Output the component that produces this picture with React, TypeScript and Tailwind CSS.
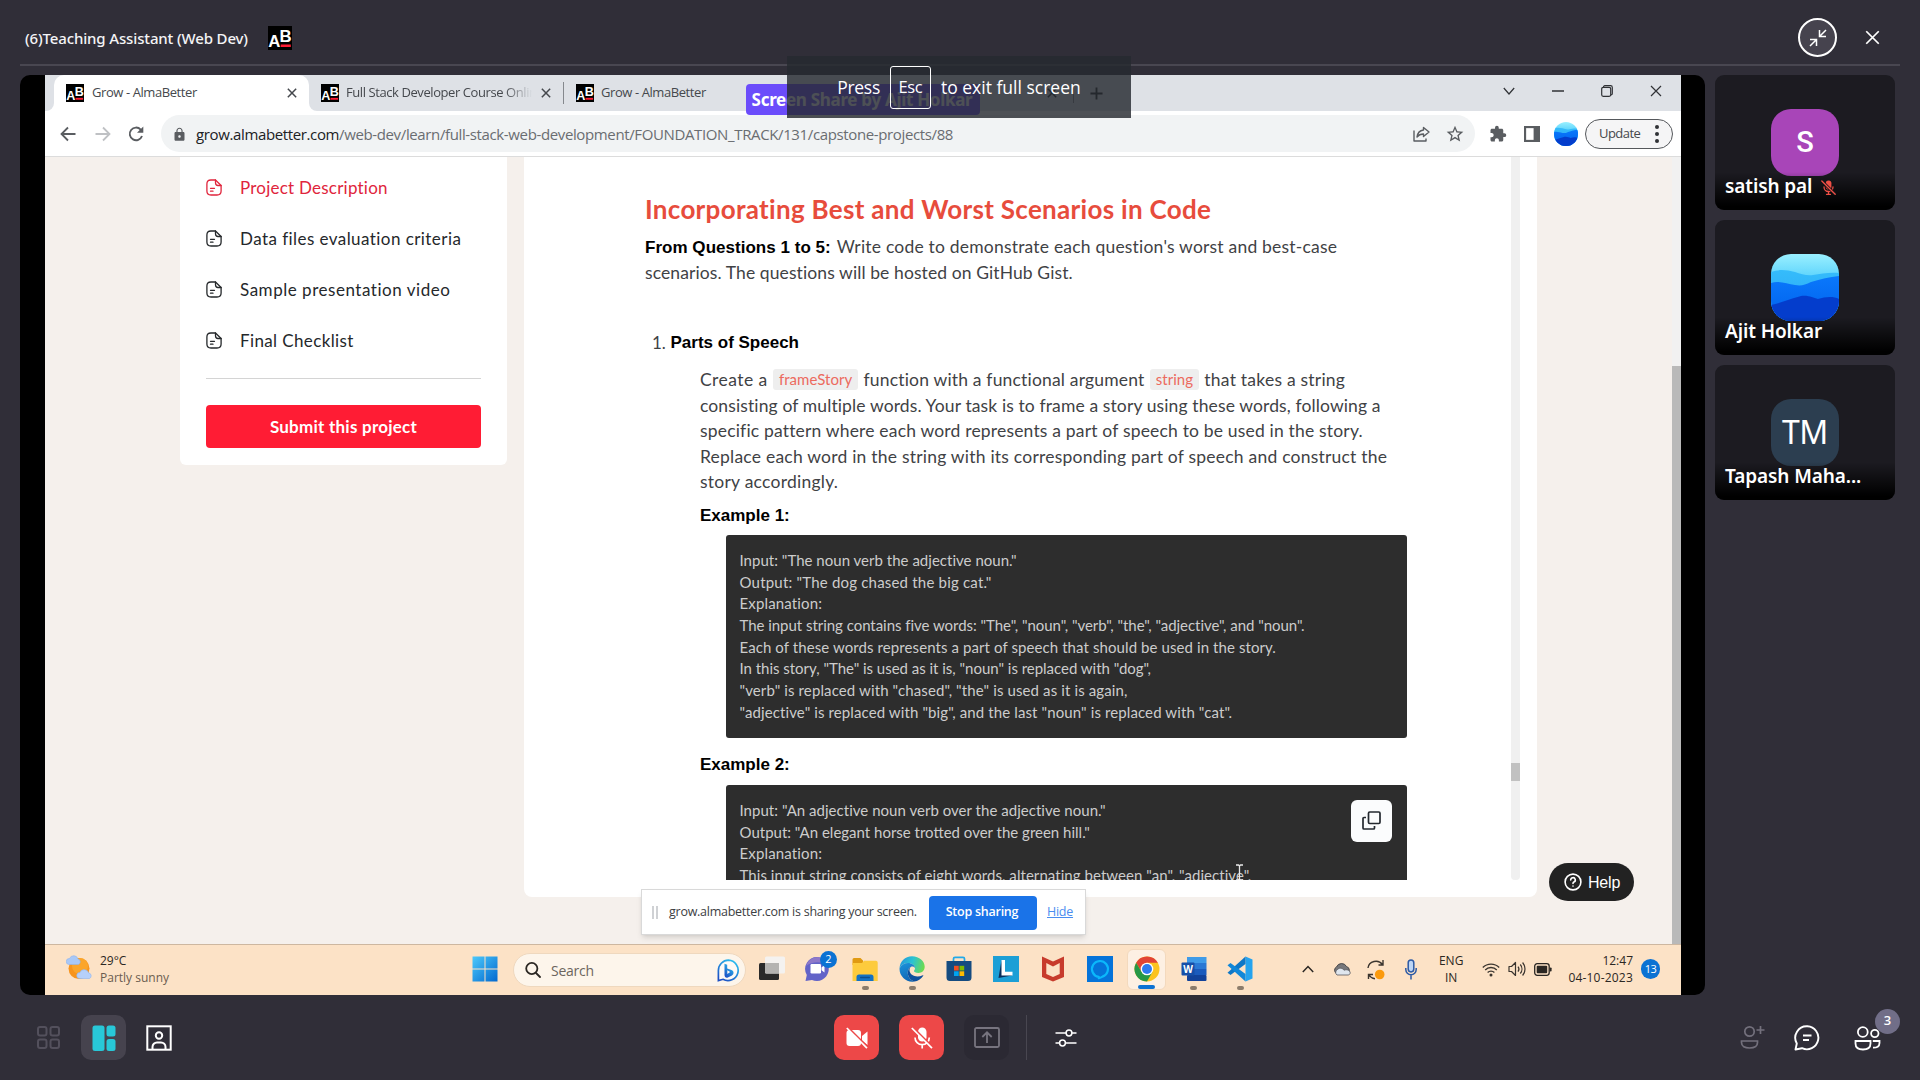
import type { ReactNode } from "react";
import { MdExtension, MdLock, MdStarBorder } from "react-icons/md";

/* ---------- logos and pictures ---------- */

function AlmaLogo({ size }: { size: number }) {
  return (
    <svg width={size} height={size} viewBox="0 0 20 20" className="shrink-0">
      <rect width="20" height="20" fill="#000" />
      <text x="0.2" y="17.5" fontSize="14" fontWeight="700" fill="#fff" fontFamily="Liberation Sans, sans-serif">A</text>
      <text x="9.6" y="13.4" fontSize="14" fontWeight="700" fill="#fff" fontFamily="Liberation Sans, sans-serif">B</text>
      <rect x="10.6" y="15.4" width="8.4" height="2.1" fill="#ff1c34" />
    </svg>
  );
}

function Hills({ size, id }: { size: number; id: string }) {
  return (
    <svg width={size} height={size} viewBox="0 0 68 68" preserveAspectRatio="none" className="block shrink-0">
      <defs>
        <linearGradient id={id} x1="0" y1="0" x2="0" y2="1">
          <stop offset="0" stopColor="#9af0ff" />
          <stop offset="0.35" stopColor="#5cd3fc" />
        </linearGradient>
        <linearGradient id={id + "m"} x1="0" y1="0" x2="0" y2="1">
          <stop offset="0" stopColor="#35bcfb" />
          <stop offset="0.5" stopColor="#2fb0f8" />
        </linearGradient>
        <linearGradient id={id + "n"} x1="0" y1="0" x2="0" y2="1">
          <stop offset="0" stopColor="#0a78fb" />
          <stop offset="1" stopColor="#0060ec" />
        </linearGradient>
      </defs>
      <rect width="68" height="68" fill={`url(#${id})`} />
      <path d="M0 18C8 15 16 16 24 18C30 20 36 22 42 21C50 20 58 18 68 19V68H0Z" fill={`url(#${id}m)`} />
      <path d="M0 29C8 26 16 30 24 31C30 32 34 31 40 28C50 25 58 23 68 22V68H0Z" fill={`url(#${id}n)`} />
      <path d="M0 51C10 49 22 44 30 42C38 41 42 44 47 45C54 43 62 42 68 45V68H0Z" fill="#043dcc" />
    </svg>
  );
}

function DocIcon() {
  return (
    <svg width="16" height="17" viewBox="0 0 16 17" fill="none" stroke="currentColor" strokeWidth="1.3" strokeLinecap="round" strokeLinejoin="round" className="shrink-0">
      <path d="M9.5 1H5C2 1 0.9 2.3 0.9 5V12C0.9 14.8 2 16 5 16H11C14 16 15.1 14.8 15.1 12V6.5Z" />
      <path d="M9.5 1V3.8C9.5 6 10.2 6.5 12 6.5H15.1" />
      <path d="M4.5 9.3H8.5M4.5 12.2H7" />
    </svg>
  );
}

/* ---------- taskbar icons ---------- */

function WeatherIcon() {
  return (
    <svg width="27" height="26" viewBox="0 0 27 26">
      <circle cx="13" cy="13.5" r="10.5" fill="#f7941d" />
      <circle cx="14" cy="11" r="8" fill="#fba52b" />
      <path d="M3 9.5a3 3 0 0 1 .5-6A4.5 4.5 0 0 1 12 4a2.9 2.9 0 0 1 .5 5.5Z" fill="#a9c8f7" stroke="#8db3ee" strokeWidth="0.6" />
      <path d="M13.5 23.5a3 3 0 0 1 .5-6 4.6 4.6 0 0 1 8.7.5 2.9 2.9 0 0 1 .8 5.5Z" fill="#b6d0fa" stroke="#8db3ee" strokeWidth="0.6" />
    </svg>
  );
}

function StartIcon() {
  return (
    <svg width="26" height="26" viewBox="0 0 26 26">
      <defs>
        <linearGradient id="win" x1="0" y1="0" x2="1" y2="1">
          <stop offset="0" stopColor="#4cc9fb" />
          <stop offset="1" stopColor="#0268cf" />
        </linearGradient>
      </defs>
      <path d="M0.5 0.5H12.5V12.5H0.5ZM13.5 0.5H25.5V12.5H13.5ZM0.5 13.5H12.5V25.5H0.5ZM13.5 13.5H25.5V25.5H13.5Z" fill="url(#win)" />
    </svg>
  );
}

function BingIcon() {
  return (
    <svg width="23" height="23" viewBox="0 0 23 23" fill="none">
      <defs>
        <linearGradient id="bing" x1="0.8" y1="0" x2="0.2" y2="1">
          <stop offset="0" stopColor="#2bc0f0" />
          <stop offset="1" stopColor="#1c4fc4" />
        </linearGradient>
      </defs>
      <path d="M11.5 1.2A10.2 10.2 0 1 1 6 20.3L1.4 21.6V11.5A10.2 10.2 0 0 1 11.5 1.2Z" stroke="url(#bing)" strokeWidth="1.7" fill="#fdfaf6" />
      <path d="M7.5 4.8L10.2 5.8V9.5L14.5 11C17 12 17.2 15 15 16.5L10.8 18.5C9 19.2 7.5 17.8 7.5 16Z" fill="url(#bing)" />
      <path d="M10.3 11.2L13.2 13L10.3 15Z" fill="#fdfaf6" />
    </svg>
  );
}

function TaskViewIcon() {
  return (
    <svg width="26" height="26" viewBox="0 0 26 26">
      <rect x="0" y="7" width="20" height="17" rx="1.5" fill="#2a2a2a" />
      <rect x="6" y="0.5" width="20" height="17" rx="1.5" fill="#f4f2f0" />
      <path d="M6 7H20V17.5H7.5A1.5 1.5 0 0 1 6 16Z" fill="#b4b3b1" />
    </svg>
  );
}

function ChatIcon() {
  return (
    <svg width="26" height="26" viewBox="0 0 26 26">
      <path d="M12.5 1A12 12 0 1 1 7 24L0.5 25L1.8 19A12 12 0 0 1 12.5 1Z" fill="#6263c8" />
      <path d="M12.5 1A12 12 0 0 0 1 10C8 5 17 5 24 10A12 12 0 0 0 12.5 1Z" fill="#8d78c9" />
      <rect x="5.5" y="8" width="10.5" height="9.5" rx="1.2" fill="#fff" />
      <path d="M16.5 11.5L19.5 9V16.5L16.5 14.2Z" fill="#fff" />
    </svg>
  );
}

function FolderIcon() {
  return (
    <svg width="26" height="26" viewBox="0 0 26 26">
      <path d="M0.5 3.5A1.5 1.5 0 0 1 2 2H8.5L11 4.5V9H0.5Z" fill="#e09a12" />
      <path d="M0.5 7H10L12 4.8H24A1.8 1.8 0 0 1 25.7 6.5V25H0.5Z" fill="#fdcb3d" />
      <path d="M4.5 25V21A2.5 2.5 0 0 1 7 18.5H19A2.5 2.5 0 0 1 21.5 21V25Z" fill="#1272c4" />
      <rect x="8" y="20.8" width="10" height="1.5" rx="0.7" fill="#0a4e8f" />
    </svg>
  );
}

function EdgeIcon() {
  return (
    <svg width="26" height="26" viewBox="0 0 26 26">
      <defs>
        <linearGradient id="eg1" x1="0" y1="0.3" x2="1" y2="0.5">
          <stop offset="0" stopColor="#2497dc" />
          <stop offset="0.5" stopColor="#2bc3d2" />
          <stop offset="1" stopColor="#6ddb4d" />
        </linearGradient>
        <linearGradient id="eg2" x1="0" y1="0" x2="0.3" y2="1">
          <stop offset="0" stopColor="#1b94dc" />
          <stop offset="1" stopColor="#1167b5" />
        </linearGradient>
      </defs>
      <path d="M0.5 12.5C0.9 5.5 6 0.3 13 0.3C20.5 0.3 25.7 5.5 25.7 10.8C25.7 14.5 23 17 19.5 17C16.5 17 15 15.9 15 15C15 14.4 16 14 16 12.2C16 9.5 13 7 9 7C5 7 2 9 0.5 12.5Z" fill="url(#eg1)" />
      <path d="M0.5 12.5C2 9 5 7 9 7C13 7 16 9.5 16 12C15 10.5 13.5 10.3 12.5 10.5C10 11.5 8.5 14 8.8 17.5C9.2 21 11.5 24.5 15.5 25.5C8 27 0.3 21 0.5 12.5Z" fill="url(#eg2)" />
      <path d="M12 10.7C9.8 12.5 10 16.5 13 18.8C16 21 20 21 23.8 19.2C24.3 19 24.6 19.3 24.3 19.8C22 23.3 18.8 25.2 15.5 25.5C11.5 24.5 9.2 21 8.8 17.5C8.6 14.5 9.7 11.9 12 10.7Z" fill="#0d4f9c" />
    </svg>
  );
}

function StoreIcon() {
  return (
    <svg width="26" height="26" viewBox="0 0 26 26">
      <path d="M7.5 6V2.8A1.5 1.5 0 0 1 9 1.3H17A1.5 1.5 0 0 1 18.5 2.8V6" fill="none" stroke="#22a9e8" strokeWidth="1.7" />
      <path d="M0.5 5H25.5V21.5A3.5 3.5 0 0 1 22 25H4A3.5 3.5 0 0 1 0.5 21.5Z" fill="#154b80" />
      <rect x="8" y="9.8" width="4.7" height="4.7" fill="#f25022" />
      <rect x="13.5" y="9.8" width="4.7" height="4.7" fill="#7fba00" />
      <rect x="8" y="15.3" width="4.7" height="4.7" fill="#00a4ef" />
      <rect x="13.5" y="15.3" width="4.7" height="4.7" fill="#ffb900" />
    </svg>
  );
}

function LIcon() {
  return (
    <svg width="26" height="26" viewBox="0 0 26 26">
      <rect width="26" height="26" fill="#1c9fd6" />
      <path d="M8.5 4L5.5 22L19 19.5V17H10Z" fill="#0a2f5c" />
      <path d="M8.5 4H12V15.8H19.5V19.5H8.5Z" fill="#fff" />
    </svg>
  );
}

function McAfeeIcon() {
  return (
    <svg width="26" height="26" viewBox="0 0 26 26">
      <path d="M2 0.5L13 5.5L24 0.5V21L13 25.5L2 21Z" fill="#c73b2c" />
      <path d="M6.3 7L13 10.5L19.7 7V18L13 21L6.3 18Z" fill="#fce2c6" />
    </svg>
  );
}

function AlexaIcon() {
  return (
    <svg width="26" height="26" viewBox="0 0 26 26">
      <rect width="26" height="26" fill="#0573d9" />
      <path d="M11.7 20.9A8 8 0 1 1 15.5 20.6Q13.5 21.8 11.8 22.2Z" fill="none" stroke="#0bb8fb" strokeWidth="2.2" strokeLinejoin="round" />
    </svg>
  );
}

function ChromeIcon() {
  return (
    <svg width="26" height="26" viewBox="0 0 26 26">
      <circle cx="13" cy="13" r="12.5" fill="#fcc31e" />
      <path d="M2.17 6.75A12.5 12.5 0 0 1 23.83 6.75H13L7.6 16.1Z" fill="#e24435" />
      <path d="M2.17 6.75A12.5 12.5 0 0 0 13 25.5L18.4 16.1H7.6Z" fill="#279847" />
      <circle cx="13" cy="13" r="6.3" fill="#fff" />
      <circle cx="13" cy="13" r="5" fill="#2f7bf0" />
    </svg>
  );
}

function WordIcon() {
  return (
    <svg width="26" height="26" viewBox="0 0 26 26">
      <rect x="6" y="1" width="19.5" height="6" fill="#3f9be8" />
      <rect x="6" y="7" width="19.5" height="6" fill="#2a78d4" />
      <rect x="6" y="13" width="19.5" height="6" fill="#1b5bbd" />
      <rect x="6" y="19" width="19.5" height="6" rx="1" fill="#12429a" />
      <rect x="0.5" y="6.5" width="13" height="13" rx="1" fill="#164fa8" />
      <text x="7" y="16.8" textAnchor="middle" fontSize="10" fontWeight="700" fill="#fff" fontFamily="Open Sans, sans-serif">W</text>
    </svg>
  );
}

function CodeIcon() {
  return (
    <svg width="26" height="26" viewBox="0 0 26 26">
      <path d="M18.5 0.5L25.5 3.5V22.5L18.5 25.5Z" fill="#25a3ee" />
      <path d="M18.5 0.5V8L3.5 19L0.5 16.7Z" fill="#0f77c6" />
      <path d="M18.5 25.5V18L3.5 7L0.5 9.3Z" fill="#1187d8" />
    </svg>
  );
}

function TaskItem({ children, running, active, badge }: { children: ReactNode; running?: boolean; active?: boolean; badge?: string }) {
  return (
    <div className={active ? "relative flex h-[41px] w-[39px] flex-col items-center rounded-md border border-[#f3d9bd] bg-[#fdf0e3] pt-[6px]" : "relative flex h-[41px] w-[39px] flex-col items-center pt-[7px]"}>
      {children}
      {running && <span className="absolute bottom-0 h-[4px] w-[7px] rounded-full bg-[#8c7c6b]" />}
      {active && <span className="absolute bottom-0 h-[4px] w-[17px] rounded-full bg-[#0b72d3]" />}
      {badge && (
        <span className="absolute top-[2px] right-[1px] flex size-[17px] items-center justify-center rounded-full bg-[#0b72d3] font-['Open_Sans',sans-serif] text-[11px] text-white">
          {badge}
        </span>
      )}
    </div>
  );
}

function Taskbar() {
  return (
    <div className="flex h-[51px] w-full shrink-0 border-t border-[#cdb7a0] bg-[#fce2c6] font-['Open_Sans',sans-serif] text-[#2b2723]">
      <div className="flex w-[420px] gap-[7px] pt-[10px] pl-[21px]">
        <WeatherIcon />
        <div className="-mt-[3px] flex flex-col text-[12px] leading-[17px]">
          <span>29°C</span>
          <span className="text-[#6b5d50]">Partly sunny</span>
        </div>
      </div>
      <div className="flex w-[60px] items-start pt-[11px] pl-[7px]">
        <StartIcon />
      </div>
      <div className="mt-[8px] -ml-[12px] flex h-[34px] w-[233px] items-center rounded-full border border-[#efd8be] bg-[#fdf5eb] pr-[5px] pl-[11px]">
        <svg width="16" height="16" viewBox="0 0 16 16" fill="none" stroke="#2b2723" strokeWidth="1.8" strokeLinecap="round">
          <circle cx="6.8" cy="6.5" r="5.6" />
          <path d="M11 11L15 15" />
        </svg>
        <span className="ml-[10px] flex-1 text-[14px] tracking-[-0.25px] text-[#6c655e]">Search</span>
        <BingIcon />
      </div>
      <div className="mt-[4px] ml-[6px] flex gap-[7.9px]">
        <TaskItem><TaskViewIcon /></TaskItem>
        <TaskItem badge="2"><ChatIcon /></TaskItem>
        <TaskItem running><FolderIcon /></TaskItem>
        <TaskItem running><EdgeIcon /></TaskItem>
        <TaskItem><StoreIcon /></TaskItem>
        <TaskItem><LIcon /></TaskItem>
        <TaskItem><McAfeeIcon /></TaskItem>
        <TaskItem><AlexaIcon /></TaskItem>
        <TaskItem active><ChromeIcon /></TaskItem>
        <TaskItem running><WordIcon /></TaskItem>
        <TaskItem running><CodeIcon /></TaskItem>
      </div>
      <div className="ml-auto flex h-[48px] items-center pr-[21px]">
        <svg width="12" height="8" viewBox="0 0 12 8" fill="none" stroke="#2b2723" strokeWidth="1.5"><path d="M0.8 7L6 1.5L11.2 7" /></svg>
        <svg width="18" height="14" viewBox="0 0 18 14" className="ml-[19px]">
          <path d="M4 11.5A3.5 3.5 0 0 1 3.5 5A5.5 5.5 0 0 1 13.5 4.5A4 4 0 0 1 14 12Z" fill="#77777a" stroke="#3f3f42" strokeWidth="0.9" />
          <path d="M4 13A3.2 3.2 0 0 1 4.5 7.5C7 5 10 6.5 11 8.2C14 7 17.2 8.5 17.2 10.8C17.2 12.2 16 13 15 13Z" fill="#dfe6ee" stroke="#55555a" strokeWidth="0.8" />
        </svg>
        <svg width="18" height="21" viewBox="0 0 18 21" className="ml-[16px]" fill="none" stroke="#3b352f" strokeWidth="1.4">
          <path d="M1 9A8 7.5 0 0 1 15.5 5.5M16 1V6H11.5" />
          <path d="M1.5 20V15.5H6M2 16A8 7 0 0 0 8 19.8" />
          <circle cx="12.7" cy="15.5" r="4.8" fill="#fb9a0c" stroke="none" />
        </svg>
        <svg width="12" height="21" viewBox="0 0 12 21" className="ml-[20px]" fill="none" stroke="#2c5aa5" strokeWidth="1.5">
          <rect x="3.2" y="0.9" width="5.6" height="12" rx="2.8" fill="#bcd5f5" />
          <path d="M0.8 9V10.5A5.2 5.2 0 0 0 11.2 10.5V9M6 15.7V20.5" />
        </svg>
        <div className="ml-[22px] flex flex-col items-center text-[12px] leading-[17px]">
          <span>ENG</span>
          <span>IN</span>
        </div>
        <svg width="18" height="15" viewBox="0 0 18 15" className="ml-[19px]" fill="none" stroke="#3b352f" strokeWidth="1.3">
          <path d="M0.8 5.5A11.5 11.5 0 0 1 17.2 5.5M3.2 8A8 8 0 0 1 14.8 8M5.6 10.5A4.8 4.8 0 0 1 12.4 10.5" />
          <circle cx="9" cy="13" r="1.5" fill="#3b352f" stroke="none" />
        </svg>
        <svg width="18" height="16" viewBox="0 0 18 16" className="ml-[8px]" fill="none" stroke="#3b352f" strokeWidth="1.2" strokeLinejoin="round">
          <path d="M1 5.5H3.5L7.5 1.5V14.5L3.5 10.5H1Z" />
          <path d="M10 5.5A4 4 0 0 1 10 10.5M12.3 3.5A7 7 0 0 1 12.3 12.5M14.6 1.5A10 10 0 0 1 14.6 14.5" />
        </svg>
        <svg width="18" height="13" viewBox="0 0 18 13" className="ml-[8px]">
          <rect x="0.7" y="0.7" width="14.5" height="11.6" rx="2.5" fill="none" stroke="#2b2723" strokeWidth="1.3" />
          <rect x="2.7" y="2.7" width="10.5" height="7.6" rx="1" fill="#2b2723" />
          <rect x="15.8" y="4.5" width="1.8" height="4" rx="0.8" fill="#2b2723" />
        </svg>
        <div className="ml-[16px] flex flex-col items-end text-[12px] leading-[17px]">
          <span>12:47</span>
          <span className="tracking-[0.2px]">04-10-2023</span>
        </div>
        <span className="ml-[8px] flex h-[20px] w-[19px] items-center justify-center rounded-full bg-[#0b72d3] text-[11px] tracking-[-0.5px] text-white">13</span>
      </div>
    </div>
  );
}

/* ---------- browser chrome ---------- */

function CrossIcon({ size, width = 1.8 }: { size: number; width?: number }) {
  return (
    <svg width={size} height={size} viewBox="0 0 12 12" fill="none" stroke="currentColor" strokeWidth={width} className="shrink-0">
      <path d="M1 1L11 11M11 1L1 11" />
    </svg>
  );
}

function TabStrip() {
  return (
    <div className="flex h-[36px] shrink-0 bg-[#dee1e6] font-['Open_Sans',sans-serif] text-[13px] tracking-[-0.42px] text-[#45484d]">
      <div className="w-[9px] shrink-0 bg-white"><div className="h-full rounded-br-lg bg-[#dee1e6]" /></div>
      <div className="flex w-[255px] shrink-0 items-center rounded-t-[10px] bg-white pr-[12px] pl-[12px]">
        <AlmaLogo size={18} />
        <span className="ml-[8px] flex-1">Grow - AlmaBetter</span>
        <CrossIcon size={10} />
      </div>
      <div className="w-[255px] shrink-0 bg-white">
        <div className="flex h-full items-center rounded-bl-lg bg-[#dee1e6] pl-[12px]">
          <AlmaLogo size={18} />
          <span className="ml-[7px] w-[187px] overflow-hidden mask-r-from-85% tracking-[-0.42px] whitespace-nowrap">Full Stack Developer Course Online</span>
          <span className="ml-[9px] flex"><CrossIcon size={10} /></span>
          <span className="ml-[12px] h-[22px] w-px bg-[#85888d]" />
        </div>
      </div>
      <div className="flex w-[255px] shrink-0 items-center pl-[12px]">
        <AlmaLogo size={18} />
        <span className="ml-[7px]">Grow - AlmaBetter</span>
      </div>
      <div className="flex w-[284px] items-center justify-end gap-[16px] text-[#202124]">
        <CrossIcon size={10} />
        <span className="h-[20px] w-px bg-[#85888d]" />
        <svg width="13" height="13" viewBox="0 0 14 14" stroke="currentColor" strokeWidth="2"><path d="M7 0.5V13.5M0.5 7H13.5" /></svg>
      </div>
      <div className="ml-auto flex h-[32px] items-center gap-[37px] pr-[19px] text-[#303236]">
        <svg width="12" height="8" viewBox="0 0 12 8" fill="none" stroke="currentColor" strokeWidth="1.2"><path d="M0.8 1L6 7L11.2 1" /></svg>
        <svg width="12" height="2" viewBox="0 0 12 2"><path d="M0 1H12" stroke="currentColor" strokeWidth="1.5" /></svg>
        <svg width="12" height="12" viewBox="0 0 12 12" fill="none" stroke="currentColor" strokeWidth="1.2">
          <rect x="0.7" y="2.3" width="9" height="9" rx="1.5" />
          <path d="M2.5 2.3V2A1.3 1.3 0 0 1 3.8 0.7H9.5A1.8 1.8 0 0 1 11.3 2.5V8.5A1.3 1.3 0 0 1 10 9.8" />
        </svg>
        <CrossIcon size={12} width={1.2} />
      </div>
    </div>
  );
}

function Toolbar() {
  return (
    <div className="flex h-[46px] shrink-0 items-center border-b border-[#dcdcdc] bg-white text-[#5a5d61]">
      <svg width="16" height="16" viewBox="0 0 16 16" fill="none" stroke="currentColor" strokeWidth="1.8" className="ml-[15px]"><path d="M15.5 8H1.8M8 1.5L1.5 8L8 14.5" /></svg>
      <svg width="16" height="16" viewBox="0 0 16 16" fill="none" stroke="#bfc1c4" strokeWidth="1.8" className="ml-[19px]"><path d="M0.5 8H14.2M8 1.5L14.5 8L8 14.5" /></svg>
      <svg width="17" height="16" viewBox="0 0 17 16" fill="none" stroke="currentColor" strokeWidth="1.9" className="ml-[17px]">
        <path d="M14 10A6.3 6.3 0 1 1 12.7 3.6L14.5 5.5" />
        <path d="M15.3 0.5V6.8H9Z" fill="currentColor" stroke="none" />
      </svg>
      <div className="ml-[16px] flex h-[37px] w-[1314px] items-center rounded-full bg-[#f1f3f4] pt-px pr-[10px] pl-[11px]">
        <MdLock size={15} />
        <span className="ml-[9px] font-['Open_Sans',sans-serif] text-[15px] tracking-[-0.37px] whitespace-nowrap text-[#6a6d71]">
          <span className="text-[#202124]">grow.almabetter.com</span>/web-dev/learn/full-stack-web-development/FOUNDATION_TRACK/131/capstone-projects/88
        </span>
        <svg width="17" height="16" viewBox="0 0 17 16" fill="none" stroke="currentColor" strokeWidth="1.4" strokeLinejoin="round" className="ml-auto">
          <path d="M1 4.5V15H13V12.5" />
          <path d="M10.5 1.5L16 6L10.5 10.5V8C7.5 8 5.5 9 4 11C4.500 7 7 4.5 10.5 4Z" />
        </svg>
        <span className="ml-[15px] flex"><MdStarBorder size={20} /></span>
      </div>
      <span className="ml-[14px] flex"><MdExtension size={18} /></span>
      <svg width="16" height="16" viewBox="0 0 15 15" className="ml-[17px]">
        <rect x="1" y="1" width="13" height="13" fill="none" stroke="currentColor" strokeWidth="2" />
        <rect x="9" y="1" width="5" height="13" fill="currentColor" />
      </svg>
      <span className="ml-[14px] overflow-hidden rounded-full"><Hills size={24} id="hs" /></span>
      <div className="ml-[7px] flex h-[30px] w-[88px] items-center rounded-full border-[1.5px] border-[#55585c] bg-[#f5f5f6] pl-[13px] font-['Open_Sans',sans-serif] text-[13px] tracking-[-0.55px] text-[#45484c]">
        Update
        <span className="ml-[15px] flex flex-col gap-[3px]">
          <span className="size-[4px] rounded-full bg-[#303236]" />
          <span className="size-[4px] rounded-full bg-[#303236]" />
          <span className="size-[4px] rounded-full bg-[#303236]" />
        </span>
      </div>
    </div>
  );
}

/* ---------- page inside the browser ---------- */

function SideLink({ label, tone, active }: { label: string; tone: string; active?: boolean }) {
  return (
    <div className={active ? "flex h-[51px] items-center gap-[18px] text-[#e0253c]" : "flex h-[51px] items-center gap-[18px] text-[#25282b]"}>
      <DocIcon />
      <span className={tone}>{label}</span>
    </div>
  );
}

function Sidebar() {
  return (
    <div className="flex h-[308px] w-[327px] shrink-0 flex-col rounded-b-md bg-white px-[26px] pt-[5px] text-[17px]">
      <SideLink active label="Project Description" tone="tracking-[0.23px]" />
      <SideLink label="Data files evaluation criteria" tone="tracking-[0.44px]" />
      <SideLink label="Sample presentation video" tone="tracking-[0.53px]" />
      <SideLink label="Final Checklist" tone="tracking-[0.38px]" />
      <div className="mt-[12px] border-t border-[#d4d4d4]" />
      <button className="mt-[26px] h-[43px] rounded-[4px] bg-[#ff1c34] text-[17px] font-bold tracking-[0.24px] text-white">Submit this project</button>
    </div>
  );
}

function CodeChip({ children }: { children: ReactNode }) {
  return <code className="mx-[5.7px] inline-flex h-[21px] items-center rounded-[3px] bg-[#eeeeee] px-[5.5px] align-[1px] font-['Lato',sans-serif] text-[15px] tracking-[0.05px] text-[#ec6a5e]">{children}</code>;
}

const firstExample: [string, string][] = [
  ['Input: "The noun verb the adjective noun."', "tracking-[0.02px]"],
  ['Output: "The dog chased the big cat."', "tracking-[0.2px]"],
  ["Explanation:", "tracking-[0.15px]"],
  ['The input string contains five words: "The", "noun", "verb", "the", "adjective", and "noun".', "tracking-[-0.035px]"],
  ["Each of these words represents a part of speech that should be used in the story.", "tracking-[0.09px]"],
  ['In this story, "The" is used as it is, "noun" is replaced with "dog",', "tracking-[-0.02px]"],
  ['"verb" is replaced with "chased", "the" is used as it is again,', "tracking-[0.12px]"],
  ['"adjective" is replaced with "big", and the last "noun" is replaced with "cat".', "tracking-[0.11px]"],
];

const secondExample: [string, string][] = [
  ['Input: "An adjective noun verb over the adjective noun."', "tracking-[0.03px]"],
  ['Output: "An elegant horse trotted over the green hill."', "tracking-[0px]"],
  ["Explanation:", "tracking-[0.15px]"],
  ['This input string consists of eight words, alternating between "an", "adjective",', "tracking-[0.06px]"],
];

function CodeBlock({ lines }: { lines: [string, string][] }) {
  return (
    <div className="ml-[81px] h-[203px] w-[681px] shrink-0 rounded-[3px] bg-[#2d2d2d] pt-[15px] pl-[13.5px] text-[15px] leading-[21.7px] whitespace-nowrap text-[#cccccc]">
      {lines.map(([text, tone]) => (
        <div key={text} className={tone}>{text}</div>
      ))}
    </div>
  );
}

function Article() {
  return (
    <div className="flex h-[723px] flex-col overflow-hidden pl-[121px] whitespace-nowrap text-[#3f4245]">
      <h1 className="mt-[32px] text-[26px] leading-[40px] font-bold tracking-[0.3px] text-[#e74c3c]">Incorporating Best and Worst Scenarios in Code</h1>
      <p className="mt-[5px] text-[17.5px] leading-[25px]">
        <b className="mr-[6px] font-['Liberation_Sans',sans-serif] text-[17px] tracking-[0.03px] text-black">From Questions 1 to 5:</b>
        <span className="tracking-[0.2px]">Write code to demonstrate each question's worst and best-case</span>
        <br />
        <span className="tracking-[0.1px]">scenarios. The questions will be hosted on GitHub Gist.</span>
      </p>
      <div className="mt-[45px] flex pl-[7px] text-[17px] leading-[26px]">
        <span className="w-[18.5px]">1.</span>
        <b className="font-['Liberation_Sans',sans-serif] text-black">Parts of Speech</b>
      </div>
      <p className="mt-[11px] flex flex-col pl-[55px] text-[17.5px] leading-[25.6px]">
        <span className="h-[25.6px]">
          <span className="tracking-[0.45px]">Create a</span>
          <CodeChip>frameStory</CodeChip>
          <span className="tracking-[0.18px]">function with a functional argument</span>
          <CodeChip>string</CodeChip>
          <span className="tracking-[0.23px]">that takes a string</span>
        </span>
        <span className="tracking-[0.12px]">consisting of multiple words. Your task is to frame a story using these words, following a</span>
        <span className="tracking-[0.18px]">specific pattern where each word represents a part of speech to be used in the story.</span>
        <span className="tracking-[0.22px]">Replace each word in the string with its corresponding part of speech and construct the</span>
        <span className="tracking-[0.25px]">story accordingly.</span>
      </p>
      <b className="mt-[8px] pl-[55px] font-['Liberation_Sans',sans-serif] text-[17px] leading-[26px] text-black">Example 1:</b>
      <div className="mt-[6px] flex"><CodeBlock lines={firstExample} /></div>
      <b className="mt-[14px] pl-[55px] font-['Liberation_Sans',sans-serif] text-[17px] leading-[26px] text-black">Example 2:</b>
      <div className="relative mt-[7px] w-[762px]">
        <CodeBlock lines={secondExample} />
        <button className="absolute top-[15px] right-[15px] flex h-[42px] w-[41px] items-center justify-center rounded-md bg-[#fbfcfd] text-[#24292f]">
          <svg width="19" height="19" viewBox="0 0 19 19" fill="none" stroke="currentColor" strokeWidth="1.7" strokeLinejoin="round">
            <rect x="6.5" y="1" width="11.5" height="11.5" rx="1.2" />
            <path d="M4 6.5H2A1 1 0 0 0 1 7.5V17A1 1 0 0 0 2 18H11.5A1 1 0 0 0 12.5 17V15" />
          </svg>
        </button>
        <svg width="9" height="17" viewBox="0 0 9 17" className="absolute top-[79px] left-[590px]" fill="none" stroke="#e8e8e8" strokeWidth="1.3">
          <path d="M1 1H3.5L4.5 2L5.5 1H8M4.5 2V15M1 16H3.5L4.5 15L5.5 16H8" />
        </svg>
      </div>
    </div>
  );
}

function Page() {
  return (
    <div className="relative flex h-[787px] shrink-0 bg-[#f5f0ec] pl-[135px] font-['Lato',sans-serif]">
      <Sidebar />
      <div className="ml-[17px] flex h-[740px] w-[1013px] shrink-0 rounded-b-lg bg-white">
        <div className="w-[987px]"><Article /></div>
        <div className="h-[723px] w-[9px] rounded-b bg-[#f0f0f0] pt-[606px]">
          <div className="h-[18px] bg-[#c1c1c1]" />
        </div>
      </div>
      <div className="ml-auto w-[9px] bg-[#f1f1f1] pt-[209px]">
        <div className="h-full bg-[#b9b9b9]" />
      </div>

      <div className="absolute top-[706px] left-[1504px] flex h-[38px] w-[85px] items-center rounded-full bg-[#222222] pl-[15px] text-white">
        <svg width="18" height="18" viewBox="0 0 18 18" fill="none" stroke="currentColor" strokeWidth="1.6" strokeLinecap="round">
          <circle cx="9" cy="9" r="7.9" />
          <path d="M6.7 7A2.3 2.3 0 1 1 9.9 9.1C9.2 9.4 9 9.8 9 10.5M9 13V13.1" />
        </svg>
        <span className="ml-[6px] pt-px font-['Liberation_Sans',sans-serif] text-[16px] tracking-[-0.2px]">Help</span>
      </div>

      <div className="absolute top-[732px] left-[596px] flex h-[46px] w-[445px] items-center border border-[#d9d9d9] bg-white pt-px pl-[10px] font-['Open_Sans',sans-serif] text-[12.5px] text-[#3c4043] shadow-md">
        <span className="h-[13px] w-[6px] border-x-2 border-[#cfd1d4]" />
        <span className="ml-[11px] w-[260px] tracking-[-0.26px] whitespace-nowrap">grow.almabetter.com is sharing your screen.</span>
        <button className="h-[34px] w-[108px] rounded-[4px] bg-[#1a73e8] pr-[2px] font-semibold tracking-[-0.25px] text-white">Stop sharing</button>
        <span className="ml-[10px] tracking-[-0.25px] text-[#4a8df0] underline">Hide</span>
      </div>
    </div>
  );
}

/* ---------- meeting shell ---------- */

function Tile({ name, muted, tone, children }: { name: string; muted?: boolean; tone: string; children: ReactNode }) {
  return (
    <div className="relative flex h-[135px] w-[180px] shrink-0 justify-center overflow-hidden rounded-[9px] bg-[#1c1b21] pt-[34px]">
      <div className={tone}>{children}</div>
      <div className="absolute inset-x-0 bottom-0 flex h-[38px] items-start gap-[9px] bg-linear-to-b from-transparent to-black to-90% pl-[10px] font-['Noto_Sans',sans-serif] text-[19px] leading-[29px] font-semibold tracking-[-0.1px] whitespace-nowrap text-white">
        {name}
        {muted && (
          <svg width="15" height="15" viewBox="0 0 15 15" className="mt-[8px]" fill="none" stroke="#ef4f45" strokeWidth="1.3" strokeLinecap="round">
            <rect x="4.8" y="0.5" width="5.6" height="9" rx="2.8" fill="#ef4f45" stroke="none" />
            <path d="M3 7A4.5 4.5 0 0 0 12 7M7.5 11.5V14.2M5.5 14.3H9.5" />
            <path d="M0.8 1L14.2 14.2" stroke="#141318" strokeWidth="3" />
            <path d="M0.8 1L14.2 14.2" />
          </svg>
        )}
      </div>
    </div>
  );
}

function Header() {
  return (
    <div className="mx-[20px] flex h-[66px] shrink-0 items-center border-b-2 border-[#494751] pt-[12px] pl-[5px]">
      <span className="font-['Noto_Sans',sans-serif] text-[15px] font-medium tracking-[-0.14px] text-[#f4f4f6]">(6)Teaching Assistant (Web Dev)</span>
      <span className="ml-[20px] flex"><AlmaLogo size={24} /></span>
      <div className="mr-[20px] ml-auto flex items-center pb-px text-white">
        <span className="flex size-[39px] items-center justify-center rounded-full border-2 border-white bg-[#46434e]">
          <svg width="18" height="18" viewBox="0 0 18 18" fill="none" stroke="currentColor" strokeWidth="1.5">
            <path d="M10.5 1V7.5H17M10.5 7.5L17 1M1 10.5H7.5V17M7.5 10.5L1 17" />
          </svg>
        </span>
        <span className="ml-[28px] flex"><CrossIcon size={15} width={1.4} /></span>
      </div>
    </div>
  );
}

function ControlBar() {
  return (
    <div className="grid h-[85px] shrink-0 grid-cols-[1fr_auto_1fr] items-start pt-[20px] text-white">
      <div className="flex h-[45px] items-center pl-[36px]">
        <svg width="25" height="25" viewBox="0 0 25 25" fill="none" stroke="#53505c" strokeWidth="2">
          <rect x="2" y="2" width="8.5" height="8.5" rx="2" />
          <rect x="14.5" y="2" width="8.5" height="8.5" rx="2" />
          <rect x="2" y="14.5" width="8.5" height="8.5" rx="2" />
          <rect x="14.5" y="14.5" width="8.5" height="8.5" rx="2" />
        </svg>
        <span className="ml-[20px] flex size-[45px] items-center justify-center rounded-[10px] bg-[#46434e]">
          <svg width="24" height="26" viewBox="0 0 24 26" fill="#28c8d8">
            <rect x="0.5" y="0.5" width="12" height="25.5" rx="2.5" />
            <rect x="14.5" y="0.5" width="9" height="11" rx="2.5" />
            <rect x="14.5" y="14" width="9" height="12" rx="2.5" />
          </svg>
        </span>
        <svg width="26" height="26" viewBox="0 0 26 26" fill="none" stroke="#fff" strokeWidth="2" className="ml-[19.5px]">
          <rect x="1.3" y="1.3" width="23.4" height="23.4" />
          <circle cx="13" cy="10.5" r="3.2" />
          <path d="M6.5 24.5V22A4.5 4.5 0 0 1 11 17.5H15A4.5 4.5 0 0 1 19.5 22V24.5" />
        </svg>
      </div>

      <div className="flex items-center pl-[10px]">
        <span className="flex size-[45px] items-center justify-center rounded-[10px] bg-[#ed4848]">
          <svg width="22" height="22" viewBox="0 0 22 22" fill="#fff">
            <rect x="0.5" y="3" width="14.5" height="16" rx="3" />
            <path d="M16 9L21.5 4.5V18L16 13.5Z" />
            <path d="M2 0.5L22 20.5" stroke="#ed4848" strokeWidth="2" />
            <path d="M0.8 1L21 21.2" stroke="#fff" strokeWidth="1.7" />
          </svg>
        </span>
        <span className="ml-[20px] flex size-[45px] items-center justify-center rounded-[10px] bg-[#ed4848]">
          <svg width="22" height="22" viewBox="0 0 22 22" fill="none" stroke="#fff" strokeWidth="1.7">
            <rect x="7" y="0.5" width="8.5" height="14" rx="4.25" fill="#fff" stroke="none" />
            <path d="M4 10.5A7 7 0 0 0 18.3 10.5M11.2 17.5V21.5" />
            <path d="M2 0.5L22 20.5" stroke="#ed4848" strokeWidth="2" />
            <path d="M0.8 1L21 21.2" />
          </svg>
        </span>
        <span className="ml-[20px] flex size-[45px] items-center justify-center rounded-[10px] bg-[#2b2933]">
          <svg width="26" height="21" viewBox="0 0 26 21" fill="none" stroke="#77747f" strokeWidth="1.8">
            <rect x="1" y="1" width="24" height="19" rx="1.5" />
            <path d="M13 16V5.5M8.3 10L13 5.3L17.7 10" />
          </svg>
        </span>
        <span className="ml-[17px] h-[45px] w-px bg-[#494751]" />
        <svg width="22" height="18" viewBox="0 0 22 18" fill="none" stroke="#fff" strokeWidth="1.5" className="mr-[19px] ml-[28px]">
          <path d="M0.5 4H11M17 4H21.5M0.5 14H4.5M10.5 14H21.5" />
          <circle cx="14" cy="4" r="2.9" />
          <circle cx="7.5" cy="14" r="2.9" />
        </svg>
      </div>

      <div className="flex h-[45px] items-center justify-end pr-[39px]">
        <svg width="25" height="25" viewBox="0 0 25 25" fill="none" stroke="#73707c" strokeWidth="1.7">
          <circle cx="9.5" cy="6.5" r="4.7" />
          <path d="M1.5 16H17.5V17.5C17.5 21.5 14 23 9.5 23C5 23 1.5 21.5 1.5 17.5Z" />
          <path d="M20.5 1V9M16.5 5H24.5" />
        </svg>
        <svg width="26" height="26" viewBox="0 0 26 26" fill="none" stroke="#fff" strokeWidth="1.9" strokeLinejoin="round" className="ml-[29px]">
          <path d="M13.5 1.3A11.5 11.5 0 1 1 8 23.2L1.5 24.5L2.8 18.5A11.5 11.5 0 0 1 13.5 1.3Z" />
          <path d="M9 10.5H17.5M9 15H15" />
        </svg>
        <span className="relative ml-[34px] flex">
          <svg width="27" height="26" viewBox="0 0 27 26" fill="none" stroke="#fff" strokeWidth="1.8">
            <circle cx="8.8" cy="7" r="4.9" />
            <path d="M1.5 16H16.5V18.5C16.5 22.5 13.5 24.5 9 24.5C4.5 24.5 1.5 22.5 1.5 18.5Z" />
            <circle cx="20.8" cy="8.5" r="3.7" />
            <path d="M18.8 16H25.5V18C25.5 21.5 23 22.8 19 22.7" />
          </svg>
          <span className="absolute -top-[16px] left-[21px] flex size-[25px] items-center justify-center rounded-full bg-[#716e88] font-['Open_Sans',sans-serif] text-[13px] font-semibold">3</span>
        </span>
      </div>
    </div>
  );
}

export default function App() {
  return (
    <div className="relative flex h-[1080px] w-[1920px] flex-col overflow-hidden bg-[#302e38]">
      <Header />
      <div className="mt-[9px] flex h-[920px] shrink-0 gap-[10px] pl-[20px]">
        <div className="relative flex h-[920px] w-[1685px] shrink-0 justify-center overflow-hidden rounded-[10px] bg-black pr-[24px] pl-[25px]">
          <div className="flex w-[1636px] shrink-0 flex-col">
            <TabStrip />
            <Toolbar />
            <Page />
            <Taskbar />
          </div>
          <div className="absolute top-[9px] left-[726px] flex h-[31px] w-[234px] items-center justify-center rounded-[4px] bg-[#6b4cfb] pr-[2px] font-['Noto_Sans',sans-serif] text-[17px] font-bold tracking-[-0.3px] text-white">
            Screen Share by Ajit Holkar
          </div>
        </div>
        <div className="flex flex-col gap-[10px]">
          <Tile name="satish pal" muted tone="flex h-[67px] w-[68px] items-center justify-center rounded-[20px] bg-[#a845b8] font-['Roboto',sans-serif] text-[29px] font-medium text-white">S</Tile>
          <Tile name="Ajit Holkar" tone="h-[67px] w-[68px] overflow-hidden rounded-[20px]"><Hills size={68} id="hl" /></Tile>
          <Tile name="Tapash Maha..." tone="flex h-[67px] w-[68px] items-center justify-center rounded-[20px] bg-[#2c3e50] pb-[2px] font-['Noto_Sans',sans-serif] text-[32px] tracking-[-0.5px] text-white">TM</Tile>
        </div>
      </div>
      <ControlBar />

      <div className="absolute top-[56px] left-[787px] flex h-[62px] w-[344px] justify-center bg-[#26292f]/82 pt-[10px] font-['Open_Sans',sans-serif] text-[17.5px] text-white">
        <span className="flex h-[43px] items-center tracking-[-0.3px]">Press</span>
        <span className="mx-[10px] flex h-[43px] w-[41px] items-center justify-center rounded-[3px] border-[1.5px] border-white text-[16.5px] tracking-[-0.4px]">Esc</span>
        <span className="flex h-[43px] items-center">to exit full screen</span>
      </div>
    </div>
  );
}
